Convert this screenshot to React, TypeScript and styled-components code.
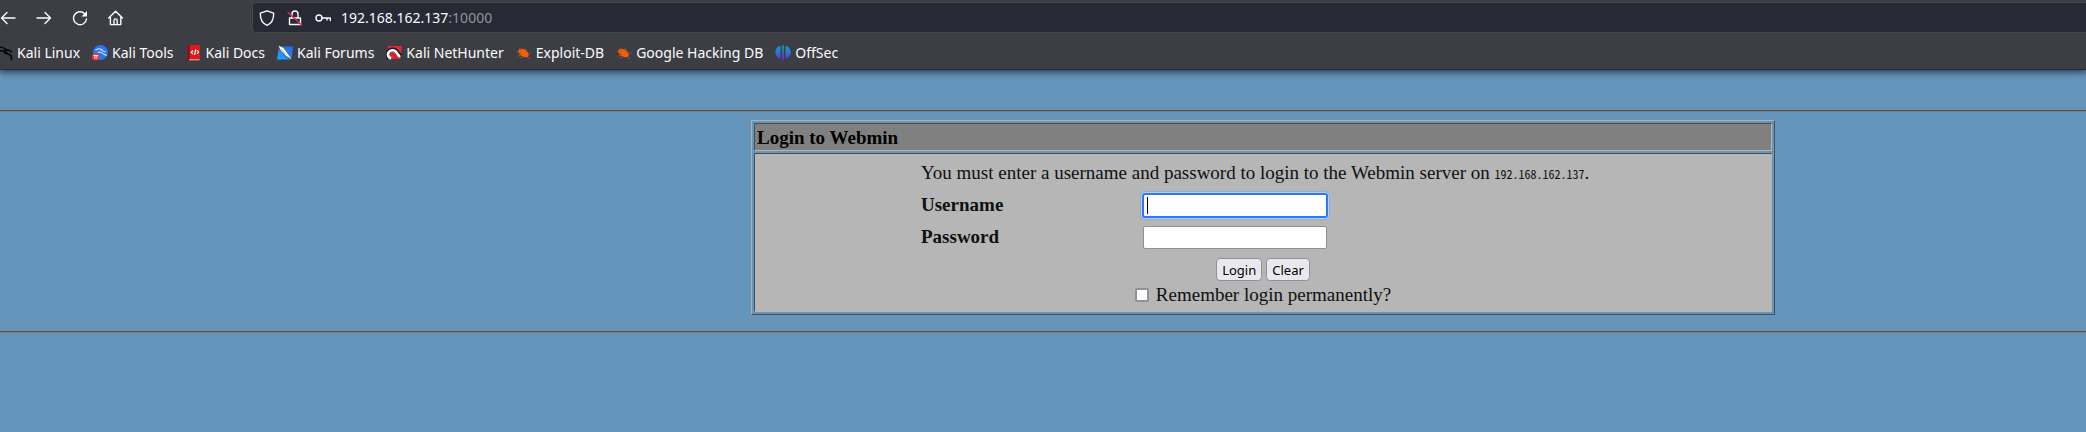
import React from 'react';
import styled, { createGlobalStyle } from 'styled-components';

const serif = '"Liberation Serif", "Times New Roman", serif';
const ui = '"Noto Sans", "Open Sans", sans-serif';

const GlobalStyle = createGlobalStyle`
  * { box-sizing: border-box; }
  html { background: #6695bb; }
  body { margin: 0; background: #6695bb; color: #101010; overflow-x: hidden; }
`;

const Chrome = styled.header`
  background: #3d3e43;
  color: #fbfbfe;
  font: 14px/20px ${ui};
  border-bottom: 1px solid #2a2b30;
  box-shadow: 0 1px 7px 1px rgba(12, 24, 36, 0.75);
`;
const NavRow = styled.div`
  display: flex;
  align-items: center;
  padding-top: 2px;
`;
const NavButtons = styled.nav`
  display: flex;
  gap: 20px;
  width: 252px;
  flex: none;
`;
const IconButton = styled.button`
  display: block;
  width: 16px;
  height: 16px;
  padding: 0;
  border: 0;
  background: none;
  color: inherit;
`;
const AddressBar = styled.div`
  display: flex;
  align-items: center;
  flex: 1;
  height: 31px;
  padding-left: 6px;
  background: #272935;
  border: 1px solid #45464c;
  border-right: 0;
  border-radius: 4px 0 0 4px;
`;
const AddressIcons = styled.div`
  display: flex;
  gap: 12px;
  width: 82px;
  flex: none;
`;
const Url = styled.div`
  span { color: #929298; }
`;
const Bookmarks = styled.nav`
  display: flex;
  gap: 12px;
  padding: 10px 0 6px;
  margin-left: -3px;
`;
const Bookmark = styled.a`
  display: flex;
  align-items: center;
  gap: 4px;
  color: inherit;
  text-decoration: none;
  white-space: nowrap;
`;
const Svg = styled.svg`
  display: block;
  width: 16px;
  height: 16px;
  flex: none;
`;

const Page = styled.main`
  padding-top: 40px;
  font: 19px/24px ${serif};
`;
const Rule = styled.hr`
  height: 2px;
  margin: 0;
  border: 0;
  border-top: 1px solid #4f5357;
  border-bottom: 1px solid #857a74;
`;
const Stage = styled.div`
  display: grid;
  grid-template-columns: 751fr 1024fr 311fr;
  padding: 8px 0 16px;
`;
const Panel = styled.section`
  grid-column: 2;
  display: grid;
  gap: 2px;
  padding: 2px;
  border: 1px solid;
  border-color: #b0b0b0 #4c4c4c #4c4c4c #b0b0b0;
`;
const PanelTitle = styled.h1`
  margin: 0;
  padding: 2px 2px 0;
  font: bold 19px/24px ${serif};
  color: #000;
  background: #808080;
  border: 1px solid;
  border-color: #4c4c4c #b6b6b6 #b6b6b6 #4c4c4c;
`;
const PanelBody = styled.div`
  padding: 7px 2px 4px;
  background: #b6b6b6;
  border: 1px solid;
  border-color: #4c4c4c #b6b6b6 #b6b6b6 #4c4c4c;
`;
const Form = styled.form`
  width: 684px;
  max-width: 100%;
  margin: 0 auto;
`;
const Intro = styled.p`
  height: 24px;
  margin: 0 0 4px;
  white-space: nowrap;
`;
const Host = styled.code`
  font: 12px/20px "Noto Sans Mono CJK SC", "Noto Sans CJK SC", "Liberation Mono", monospace;
`;
const Field = styled.div`
  display: grid;
  grid-template-columns: 222px 184px;
  align-items: center;
  height: 32px;
  label { font-weight: bold; }
`;
const TextInput = styled.input<{ $focused?: boolean }>`
  width: 184px;
  height: 23px;
  padding: 1px 4px;
  font: 14px/19px ${ui};
  background: ${p => p.$focused
    ? 'linear-gradient(#000, #000) 3px 2px / 1px 17px no-repeat #fff'
    : '#fff'};
  border: 1px solid ${p => (p.$focused ? '#2a78ff' : '#8f8f9d')};
  border-radius: 2px;
  outline: none;
  caret-color: transparent;
  box-shadow: ${p => (p.$focused
    ? '0 0 0 1px #2a78ff, 0 0 0 2px #c0cbdc, 0 0 0 3px #93acd2'
    : 'none')};
`;
const Actions = styled.div`
  display: flex;
  justify-content: center;
  gap: 4px;
  padding-top: 5px;
`;
const Button = styled.button`
  height: 23px;
  padding: 0 5px;
  font: 13px/20px ${ui};
  color: #000;
  background: #e9e9ed;
  border: 1px solid #8f8f9d;
  border-radius: 4px;
`;
const Remember = styled.div`
  display: flex;
  align-items: center;
  justify-content: center;
  gap: 7px;
  padding-top: 2px;
`;
const Checkbox = styled.input`
  appearance: none;
  width: 14px;
  height: 14px;
  margin: 0;
  background: #fff;
  border: 2px solid #8f8f9d;
  border-radius: 2px;
`;

const line = { fill: 'none', stroke: 'currentColor', strokeWidth: 1.4, strokeLinecap: 'round', strokeLinejoin: 'round' } as const;

const Back = () => <Svg viewBox="0 0 16 16" {...line}><path d="M15 8H1.5M7 2.5 1.5 8 7 13.5" /></Svg>;
const Forward = () => <Svg viewBox="0 0 16 16" {...line}><path d="M1 8h13.5M9 2.5 14.5 8 9 13.5" /></Svg>;
const Reload = () => (
  <Svg viewBox="0 0 16 16" {...line}>
    <path d="M14.5 9A6.5 6.5 0 1 1 12.5 3.5" />
    <path d="M15 1v5.5H9.5z" fill="currentColor" stroke="none" />
  </Svg>
);
const Home = () => (
  <Svg viewBox="0 0 16 16" {...line}>
    <path d="M.7 8 7.6 1.2 14.5 8M2.400 7v7.600h10.400V7M6 14.500V10.500a1.600 1.600 0 0 1 3.200 0V14.500" />
  </Svg>
);
const Shield = () => (
  <Svg viewBox="0 0 16 16" {...line}><path d="M8 .8 14.6 3.200C14.900 9 12.500 13.500 8 15.300 3.500 13.500 1.100 9 1.400 3.200z" /></Svg>
);
const Lock = () => (
  <Svg viewBox="0 0 16 16" {...line}>
    <path d="M2.500 8h11v6.500h-11zM5 7.500V4a3 3 0 0 1 6 0V7.500" />
    <path d="M1.200 2.500 14.500 15" stroke="#e22850" strokeWidth="1.500" />
  </Svg>
);
const Key = () => (
  <Svg viewBox="0 0 16 16" {...line}><circle cx="4" cy="8" r="3" /><path d="M7 8h8.300v2.500M12 8v2" /></Svg>
);

const KaliLinux = () => (
  <Svg viewBox="0 0 16 16" fill="none" stroke="#08090b" strokeLinecap="round">
    <path d="M1 3c3-1.500 6-.5 8 1.500M2 6.500c3-1.500 6-.5 8 1" strokeWidth="1.400" />
    <path d="M8.500 4.500c-2.500 3 0 4.500 3 4.700 2.500.4 3 2.500 3 5.300" strokeWidth="1.800" />
    <path d="M9 5.500c2-1.500 3-.5 5.500 1.300" strokeWidth="1.800" />
  </Svg>
);
const KaliTools = () => (
  <Svg viewBox="0 0 16 16">
    <circle cx="8.500" cy="7.500" r="7.400" fill="#2777f5" />
    <path d="M3.500 5c3-1.500 6-1 7.500.8M5.500 7.500c3-1.200 4.500 0 5.500 1.200 1 1 3 .5 3.500 2.500M10 5.500l3.500 1.500" fill="none" stroke="#c9deff" strokeWidth="1.200" />
    <circle cx="3.800" cy="11.800" r="3.800" fill="#e8323e" />
    <path d="M1.500 10.500h4.600M2.900 10.500v3.200M4.900 10.500v3.200" stroke="#fff" strokeWidth=".9" />
  </Svg>
);
const KaliDocs = () => (
  <Svg viewBox="0 0 16 16">
    <path d="M1.500 0H14v15.500H1.500z" fill="#df1818" />
    <path d="M1.500 0h2v15.500h-2z" fill="#6e1224" />
    <path d="M3 14h10.500v1.300H3z" fill="#b9999c" />
    <path d="M7 5.500 5.200 7.300 7 9M11 5l1.500 2L11 9M9.700 4.500l-1.200 5.500" fill="none" stroke="#fff" strokeWidth="1.200" />
  </Svg>
);
const KaliForums = () => (
  <Svg viewBox="0 0 16 16">
    <defs>
      <linearGradient id="forums" x1="1" y1="0" x2="0" y2="1">
        <stop offset="0" stopColor="#2467f2" />
        <stop offset="1" stopColor="#22a5ff" />
      </linearGradient>
    </defs>
    <path d="M2 1.500h14L14.500 14.500H0z" fill="url(#forums)" />
    <path d="M1 0 6.500 2.500 11 8.500 15.500 15 9.500 11.500 3.500 6z" fill="#fff" stroke="#25262b" strokeWidth=".6" />
    <path d="M4 4.500l4 4" stroke="#70757e" strokeWidth=".8" />
  </Svg>
);
const NetHunter = () => (
  <Svg viewBox="0 0 16 16">
    <path d="M2 1h14l-1.500 13H4L.5 9z" fill="#e3262f" />
    <path d="M3.500 13.500C-.5 9 2.500 4.500 7 4.500c3.500 0 4.500 3 7.500 7" fill="none" stroke="#16161b" strokeWidth="4.200" />
    <path d="M5 13.500C-.5 10.500 2.500 5 7 5.200c3.500.2 4 4 7 6.800" fill="none" stroke="#fff" strokeWidth="2.600" />
    <path d="M5.500 10.500c2.500-2.500 3 .5 5.500 3" fill="none" stroke="#c91f38" strokeWidth="1.400" />
  </Svg>
);
const Bug = () => (
  <Svg viewBox="0 0 16 16">
    <ellipse cx="7.500" cy="8" rx="5.800" ry="3.500" transform="rotate(32 7.500 8)" fill="#f0600f" />
    <path d="M.5 6.500l5 2M1.500 11.500l4-2M4 13l4-1.500M3 3l3 3M9 3l2 4M12 9l3.500-1.500M11 12l3 1.500" stroke="#b84c16" strokeWidth=".9" />
  </Svg>
);
const OffSec = () => (
  <Svg viewBox="0 0 16 16">
    <defs>
      <linearGradient id="offsec" x1="0" y1="0" x2="0" y2="1">
        <stop offset="0" stopColor="#10a5b5" />
        <stop offset=".55" stopColor="#3867dd" />
        <stop offset="1" stopColor="#6a22c8" />
      </linearGradient>
    </defs>
    <path d="M5.500.7v13C-1.500 12 -1.500 2.500 5.500.7zM7.200.3h1.600v15.500H7.200zM10.500.7v13C17.500 12 17.500 2.500 10.500.7z" fill="url(#offsec)" />
  </Svg>
);

const bookmarks = [
  { name: 'Kali Linux', Icon: KaliLinux },
  { name: 'Kali Tools', Icon: KaliTools },
  { name: 'Kali Docs', Icon: KaliDocs },
  { name: 'Kali Forums', Icon: KaliForums },
  { name: 'Kali NetHunter', Icon: NetHunter },
  { name: 'Exploit-DB', Icon: Bug },
  { name: 'Google Hacking DB', Icon: Bug },
  { name: 'OffSec', Icon: OffSec },
];

export default function App() {
  return (
    <>
      <GlobalStyle />
      <Chrome>
        <NavRow>
          <NavButtons aria-label="Navigation">
            <IconButton aria-label="Back"><Back /></IconButton>
            <IconButton aria-label="Forward"><Forward /></IconButton>
            <IconButton aria-label="Reload"><Reload /></IconButton>
            <IconButton aria-label="Home"><Home /></IconButton>
          </NavButtons>
          <AddressBar>
            <AddressIcons><Shield /><Lock /><Key /></AddressIcons>
            <Url>192.168.162.137<span>:10000</span></Url>
          </AddressBar>
        </NavRow>
        <Bookmarks aria-label="Bookmarks">
          {bookmarks.map(({ name, Icon }) => (
            <Bookmark key={name} href="#"><Icon />{name}</Bookmark>
          ))}
        </Bookmarks>
      </Chrome>
      <Page>
        <Rule />
        <Stage>
          <Panel>
            <PanelTitle>Login to Webmin</PanelTitle>
            <PanelBody>
              <Form onSubmit={e => e.preventDefault()}>
                <Intro>
                  You must enter a username and password to login to the Webmin server on <Host>192.168.162.137</Host>.
                </Intro>
                <Field>
                  <label htmlFor="user">Username</label>
                  <TextInput id="user" type="text" $focused />
                </Field>
                <Field>
                  <label htmlFor="pass">Password</label>
                  <TextInput id="pass" type="password" />
                </Field>
                <Actions>
                  <Button type="submit">Login</Button>
                  <Button type="reset">Clear</Button>
                </Actions>
                <Remember>
                  <Checkbox id="save" type="checkbox" />
                  <label htmlFor="save">Remember login permanently?</label>
                </Remember>
              </Form>
            </PanelBody>
          </Panel>
        </Stage>
        <Rule />
      </Page>
    </>
  );
}
